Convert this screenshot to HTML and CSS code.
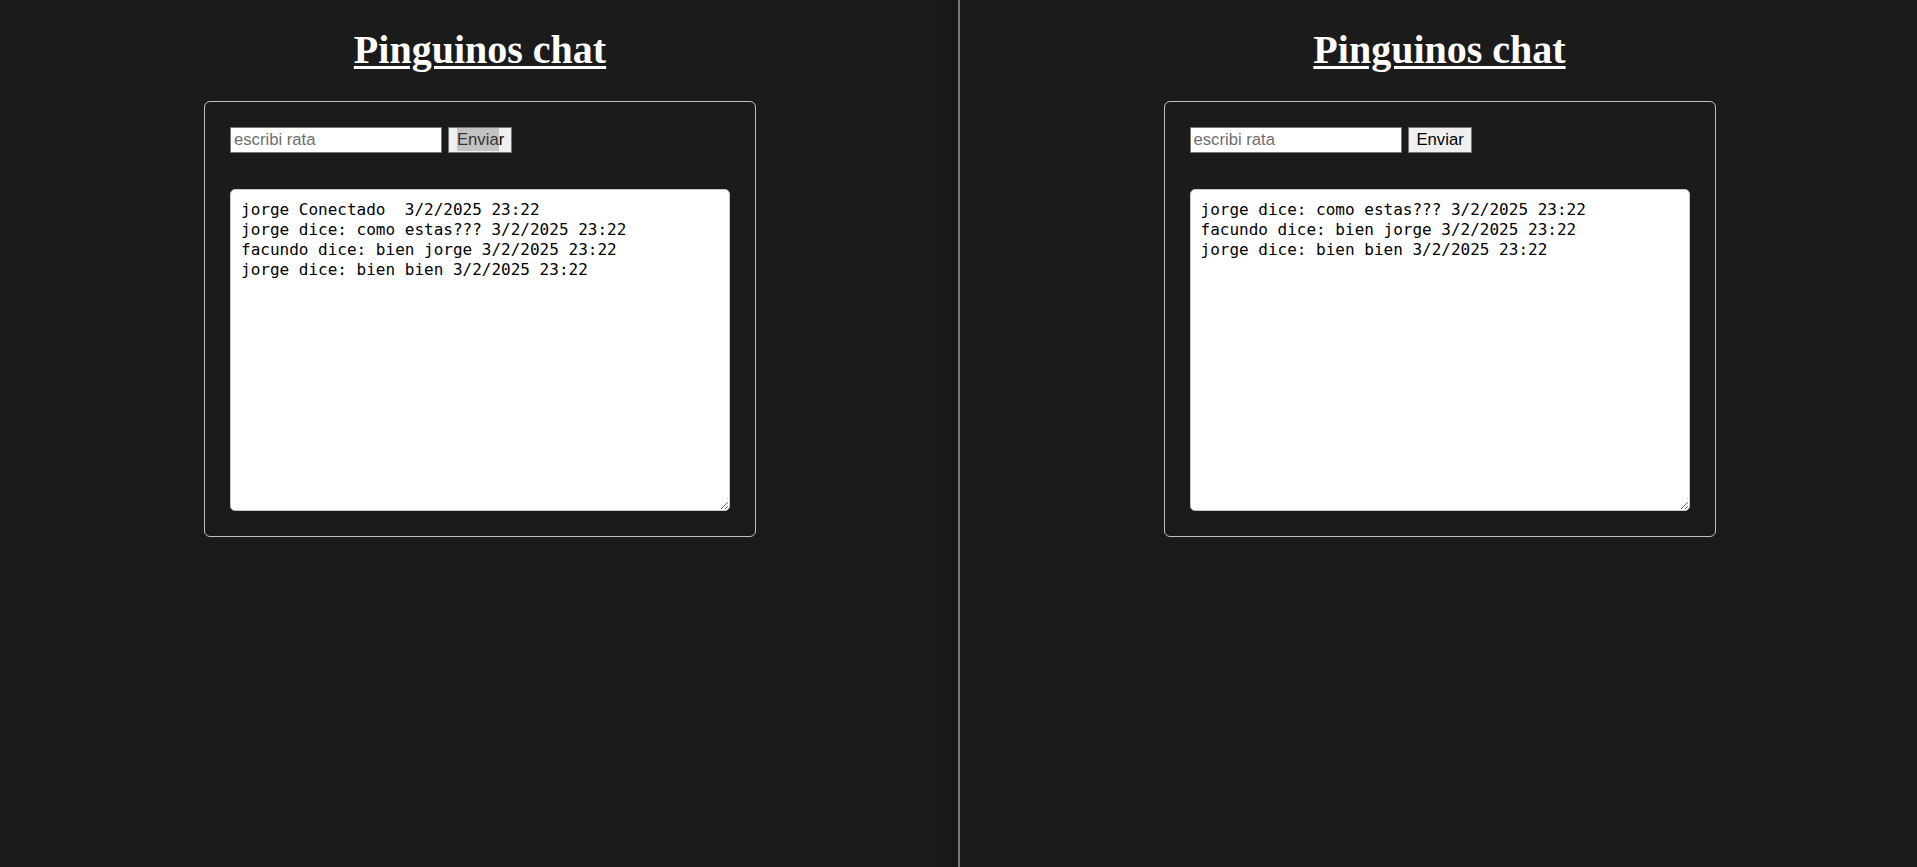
FILE: index.html
```html
<!DOCTYPE html>
<html lang="es">
<head>
<meta charset="utf-8">
<title>Pinguinos chat</title>
<link rel="stylesheet" href="styles.css">
</head>
<body>
<div class="screen">
  <section class="pane pane-left">
    <h1 class="title">Pinguinos chat</h1>
    <div class="chat-box">
      <form class="send-row">
        <input class="msg-input" type="text" placeholder="escribi rata">
        <button class="send-btn" type="button"><span class="sel">Envia</span>r</button>
      </form>
      <textarea class="log" readonly>jorge Conectado  3/2/2025 23:22
jorge dice: como estas??? 3/2/2025 23:22
facundo dice: bien jorge 3/2/2025 23:22
jorge dice: bien bien 3/2/2025 23:22</textarea>
    </div>
  </section>
  <div class="divider"></div>
  <section class="pane pane-right">
    <h1 class="title">Pinguinos chat</h1>
    <div class="chat-box">
      <form class="send-row">
        <input class="msg-input" type="text" placeholder="escribi rata">
        <button class="send-btn" type="button">Enviar</button>
      </form>
      <textarea class="log" readonly>jorge dice: como estas??? 3/2/2025 23:22
facundo dice: bien jorge 3/2/2025 23:22
jorge dice: bien bien 3/2/2025 23:22</textarea>
    </div>
  </section>
</div>
</body>
</html>
```

FILE: styles.css
```css
html, body {
  margin: 0;
  padding: 0;
  background: #1b1b1b;
  height: 100%;
}

.screen {
  display: flex;
  height: 867px;
  overflow: hidden;
}

.pane {
  background: #1b1b1b;
}

.pane-left {
  box-sizing: border-box;
  width: 958px;
  flex: none;
  padding-left: 2px;
  background: linear-gradient(to right, #1b1b1b 0, #1b1b1b 900px, #181818 958px);
}

.pane-right {
  flex: 1;
  padding-left: 2px;
}

.divider {
  width: 2px;
  flex: none;
  background: #7a7a7a;
}

.title {
  margin: 27px 0 28px;
  height: 46px;
  font-family: "Liberation Serif", "Times New Roman", serif;
  font-weight: bold;
  font-size: 40px;
  line-height: 46px;
  color: #ffffff;
  text-align: center;
  text-decoration: underline;
  text-decoration-thickness: 3px;
  text-underline-offset: 3px;
}

.chat-box {
  width: 500px;
  margin: 0 auto;
  padding: 25px;
  border: 1px solid #bdbdbd;
  border-radius: 6px;
}

.send-row {
  display: flex;
  gap: 6px;
  height: 26px;
  margin: 0;
}

.msg-input {
  box-sizing: border-box;
  width: 212px;
  height: 26px;
  margin: 0;
  padding: 0 3px;
  border: 1px solid #767676;
  border-radius: 0;
  background: #ffffff;
  font-family: "Liberation Sans", Arial, sans-serif;
  font-size: 16.67px;
  color: #000;
  outline: none;
}

.msg-input::placeholder {
  color: #6f6f6f;
}

.send-btn {
  box-sizing: border-box;
  width: 64px;
  height: 26px;
  margin: 0;
  padding: 0 0 0 8px;
  text-align: left;
  border: 1px solid #767676;
  border-radius: 0;
  background: #efefef;
  font-family: "Liberation Sans", Arial, sans-serif;
  font-size: 16.67px;
  color: #000;
}

.sel {
  background: #c3c3c3;
  color: #333;
  padding: 2px 0;
}

.log {
  display: block;
  box-sizing: border-box;
  width: 500px;
  height: 322px;
  margin: 36px 0 0;
  padding: 10px;
  border: 1px solid #c8c8c8;
  border-radius: 5px;
  background: #ffffff;
  color: #000;
  font-family: "DejaVu Sans Mono", "Liberation Mono", monospace;
  font-size: 16px;
  line-height: 20px;
  outline: none;
  overflow: hidden;
}
```
